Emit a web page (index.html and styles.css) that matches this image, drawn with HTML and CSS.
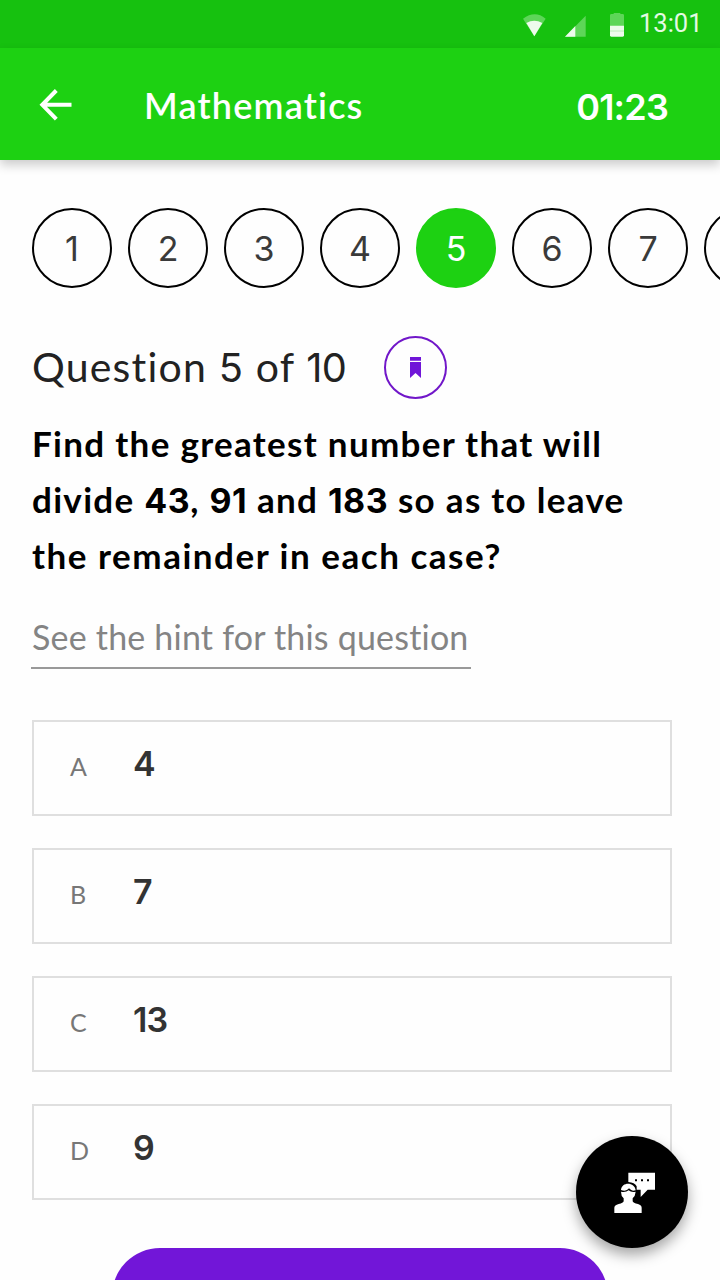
FILE: index.html
```html
<!DOCTYPE html>
<html lang="en">
<head>
<meta charset="utf-8">
<title>Mathematics</title>
<link rel="stylesheet" href="styles.css">
</head>
<body>
<div class="screen">
  <div class="status">
    <svg class="wifi" width="24" height="24" viewBox="0 0 72 72"><path class="dim" d="M0 14Q36-12 68 14L34 67Z"/><path class="lit" d="M10 27Q34 13 58 27L34 67Z"/></svg>
    <svg class="signal" width="21" height="22" viewBox="0 0 63 66"><path class="dim" d="M62 2V65H0Z"/><path class="lit" d="M31 33V65H0Z"/></svg>
    <svg class="battery" width="14" height="24" viewBox="0 0 42 72"><path class="dim" d="M0 39V7Q0 3 4 3H11V0H31V3H38Q42 3 42 7V39Z"/><path class="lit" d="M0 38H42V67Q42 71 38 71H4Q0 71 0 67Z"/><path class="seam" d="M0 54H42"/></svg>
    <span class="clock">13:01</span>
  </div>
  <header class="bar">
    <svg class="back" width="34" height="32" viewBox="0 0 34 32"><path d="M17.300 1.500L3.300 15.800L17.300 30.200M3.300 15.800H32.500"/></svg>
    <h1 class="title">Mathematics</h1>
    <span class="timer">01:23</span>
  </header>
  <main class="content">
    <nav class="pager">
      <span class="page">1</span><span class="page">2</span><span class="page">3</span><span class="page">4</span><span class="page active">5</span><span class="page">6</span><span class="page">7</span><span class="page"></span>
    </nav>
    <div class="heading">
      <h2 class="count">Question <span class="num">5</span> of <span class="num ten">10</span></h2>
      <span class="bookmark"><svg width="11" height="21" viewBox="0 0 11 21"><path d="M0 0H11V3.700H0ZM0 4.900H11V21L5.500 16L0 21Z"/></svg></span>
    </div>
    <p class="question"><span class="l1">Find the greatest number that will</span><br><span class="l2">divide <span class="num">43</span>, <span class="num">91</span> and <span class="num">183</span> so as to leave</span><br><span class="l3">the remainder in each case?</span></p>
    <a class="hint">See the hint for this question</a>
    <div class="options">
      <div class="option"><span class="letter">A</span><span class="value">4</span></div>
      <div class="option"><span class="letter">B</span><span class="value">7</span></div>
      <div class="option"><span class="letter">C</span><span class="value pair">13</span></div>
      <div class="option"><span class="letter">D</span><span class="value">9</span></div>
    </div>
    <div class="submit"></div>
  </main>
  <div class="fab">
    <svg width="72" height="64" viewBox="0 0 216 192">
      <path d="M97 38H177V89H155L134 111V89H122V79Q116 67 97 66Z"/>
      <path class="dot" d="M117 58H123V64H117ZM135 58H141V64H135ZM153 58H159V64H153Z"/>
      <path d="M75 90C76 77 86 71 96 71C107 71 118 78 119 91C111 94 106 92 99 85C93 92 85 94 75 90Z"/>
      <path d="M75 95Q89 98 98 91Q106 98 119 95Q118 108 110 115V124Q111 129 126 132Q137 136 137 143V159H55V143Q55 136 68 132Q82 129 83 124V115Q75 108 75 95Z"/>
    </svg>
  </div>
</div>
</body>
</html>
```

FILE: styles.css
```css
* { box-sizing: border-box; margin: 0; padding: 0; }
body { background: #fff; font-family: Lato, "Open Sans", sans-serif; font-variant-ligatures: none; }
.screen { position: relative; width: 720px; height: 1280px; overflow: hidden; background: #fefefe; }
svg { display: block; flex: none; }
.num, .timer, .page, .value { font-family: Inter, sans-serif; }
.num { font-size: .97em; line-height: 0; }

.status { display: flex; height: 48px; padding-left: 523px; background: #16c10f; color: #e4fae3; }
.dim { fill: #5dd658; }
.lit { fill: #edfbec; }
.seam { stroke: #a5e8a2; stroke-width: 2; }
.wifi { margin-top: 14px; }
.signal { margin: 15px 0 0 18px; }
.battery { margin: 13px 0 0 24px; }
.clock { margin-left: 15px; font: 400 25.500px/46px Roboto, sans-serif; }

.bar { position: relative; display: flex; height: 112px; padding-left: 39px; background: #1dd112; color: #fff; box-shadow: 0 5px 10px rgba(0, 0, 0, .2); }
.back { margin-top: 40.500px; fill: none; stroke: #fff; stroke-width: 4; }
.title { margin-left: 71px; font-size: 36px; line-height: 114px; font-weight: 600; letter-spacing: 1.200px; }
.timer { margin-left: auto; padding: 3px 52px 0 0; font-size: 36px; line-height: 112px; font-weight: 600; letter-spacing: -.8px; }

.content { padding: 48px 0 0 32px; }
.pager { display: flex; gap: 16px; }
.page { flex: none; width: 80px; height: 80px; border: 2px solid #000; border-radius: 50%; color: #3a3a3a; font-size: 34px; line-height: 77px; text-align: center; }
.active { background: #1dd112; border-color: #1dd112; color: #fff; }

.heading { display: flex; gap: 37px; margin-top: 48px; height: 63px; }
.count { width: 315px; white-space: nowrap; font-size: 41px; line-height: 61px; font-weight: 400; color: #222; letter-spacing: 1.200px; }
.ten { letter-spacing: -.8px; }
.bookmark { display: grid; place-items: center; width: 63px; height: 63px; border: 2px solid #7117c9; border-radius: 50%; fill: #7015d8; }

.question { margin-top: 16px; height: 168px; font-size: 35px; line-height: 56px; font-weight: 700; color: #000; white-space: nowrap; }
.l1 { letter-spacing: 1.300px; }
.l2 { letter-spacing: 1.300px; }
.l2 .num { letter-spacing: .5px; }
.l3 { letter-spacing: 1.520px; }
.hint { display: block; width: 440px; height: 66px; margin: 20px 0 0 -1px; padding-left: 1px; border-bottom: 2px solid #999; font-size: 34px; line-height: 68px; letter-spacing: .2px; color: #848484; white-space: nowrap; }
.options { display: grid; gap: 32px; margin-top: 51px; }
.option { display: flex; width: 640px; height: 96px; border: 2px solid #dfdfdf; }
.letter { width: 99px; padding-left: 36px; font-size: 25px; line-height: 89px; color: #777; }
.value { font-size: 34px; line-height: 83px; font-weight: 600; color: #333; }
.pair { letter-spacing: -1px; }
.submit { width: 496px; height: 96px; margin: 48px 0 0 80px; border-radius: 48px; background: #7216d8; }

.fab { position: absolute; left: 576px; top: 1136px; display: grid; place-items: center; width: 112px; height: 112px; border-radius: 50%; background: #000; fill: #fff; box-shadow: 0 7px 14px rgba(0, 0, 0, .35); }
.dot { fill: #000; }
```
